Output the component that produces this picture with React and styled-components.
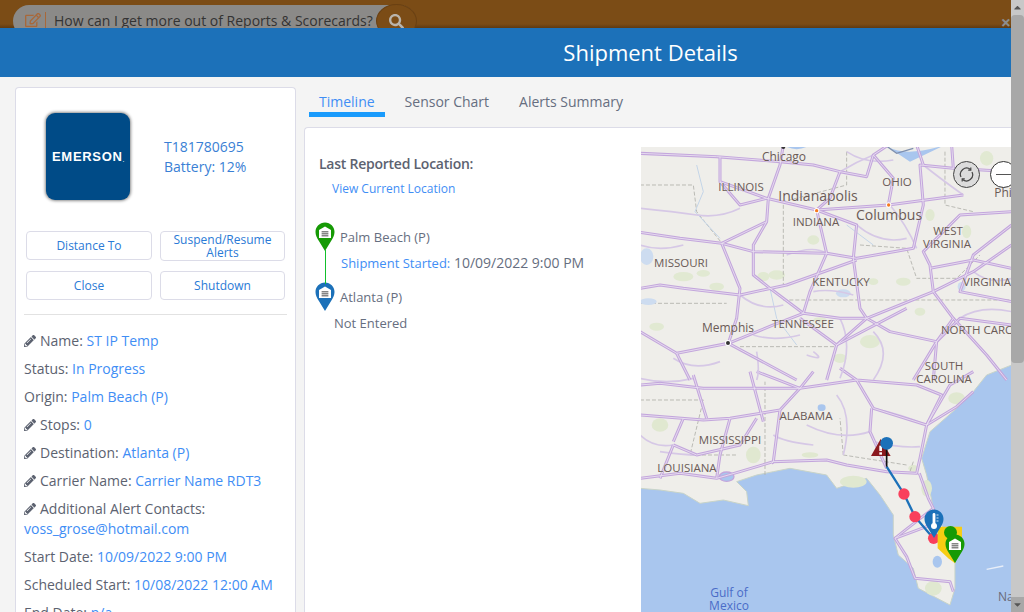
import React from 'react';
import styled, { createGlobalStyle } from 'styled-components';
import { FaPencilAlt, FaSearch, FaRegEdit, FaCaretUp, FaCaretDown } from 'react-icons/fa';

const Global = createGlobalStyle`
  html, body { margin: 0; padding: 0; height: 612px; overflow: hidden; background: #f4f4f4; }
  #root { height: 612px; }
  * { box-sizing: border-box; }
`;

const Page = styled.div`
  display: flex; width: 1024px; height: 612px; overflow: hidden;
  font-family: "Open Sans", "Liberation Sans", sans-serif; font-size: 14px; color: #5c6270;
`;
const Main = styled.div`
  flex: 1; min-width: 0; display: flex; flex-direction: column; height: 612px;
`;
const Scrollbar = styled.div`
  width: 13px; height: 612px; background: #c8c8c8; display: flex; flex-direction: column;
  align-items: stretch; color: #555; font-size: 11px;
`;
const ScrollArrow = styled.div`
  height: 15px; display: flex; align-items: center; justify-content: center; background: ${p => p.$bg};
`;
const ScrollThumb = styled.div`
  height: 348px; background: #a8a8a8; border-radius: 4px;
`;
const ScrollRest = styled.div` flex: 1; `;

const Backdrop = styled.div`
  position: relative; height: 28px; flex: none; overflow: hidden;
  background: linear-gradient(#7b4c16 0, #7b4c16 24px, #5e3a12 28px);
  padding: 5px 0 0 13px; display: flex;
`;
const SearchPill = styled.div`
  position: relative; width: 403px; height: 32px; border-radius: 16px; background: #8b8a88;
  display: flex; align-items: flex-start; padding: 6px 0 0 12px; color: #333; white-space: nowrap;
`;
const EditIcon = styled(FaRegEdit)` color: #a8683a; font-size: 16px; margin-top: 1px; `;
const PillDivider = styled.span` width: 1px; height: 16px; background: #a8683a; margin: 1px 8px 0 4px; `;
const PillText = styled.span` font-size: 14px; line-height: 19px; `;
const PillButton = styled.div`
  position: absolute; right: -1px; top: -1px; width: 41px; height: 34px; border-radius: 50%;
  background: #7b4c16; border: 1px solid #6a4012; display: flex; justify-content: center; padding-top: 9px;
  color: #b9b4ac; font-size: 15px;
`;
const CloseMark = styled.span`
  position: absolute; right: 0; top: 13px; font-size: 18px; line-height: 18px; font-weight: 700; color: #8d8d8d;
`;
const Header = styled.header`
  height: 49px; flex: none; background: #1c71b9; color: #fff; font-size: 22px; line-height: 49px;
  text-align: center; padding-left: 290px;
`;
const Body = styled.div`
  flex: 1; min-height: 0; display: flex; gap: 8px; padding: 10px 0 0 15px; overflow: hidden;
`;
const SideCard = styled.aside`
  width: 281px; flex: none; height: 560px; background: #fff; border: 1px solid #dcdce8; border-bottom: 0;
  border-radius: 4px 4px 0 0; padding: 25px 8px 0; overflow: hidden;
`;
const Identity = styled.div` display: flex; align-items: center; gap: 34px; padding-left: 22px; `;
const Logo = styled.div`
  width: 84px; height: 87px; border-radius: 9px; background: #004b87; color: #fff;
  box-shadow: 0 0 3px 1px rgba(0,0,0,.45); display: flex; align-items: center; justify-content: center;
  font-family: "Liberation Sans", sans-serif; font-weight: 700; font-size: 13px; letter-spacing: .7px;
`;
const LogoDot = styled.span` font-size: 5px; margin-top: 6px; letter-spacing: 0; `;
const IdText = styled.div` color: #3a7fd5; line-height: 20px; `;
const ButtonGrid = styled.div`
  display: grid; grid-template-columns: 126px 125px; column-gap: 8px; row-gap: 10px;
  margin: 31px 0 0 2px;
`;
const ActionButton = styled.button`
  height: ${p => p.$tall ? 30 : 29}px; background: #fff; border: 1px solid #dcdce8; border-radius: 4px;
  font: 12px/13px "Open Sans", sans-serif; color: #2a7ad6; padding: 0 4px; white-space: normal;
`;
const Divider = styled.hr`
  border: 0; border-top: 1px solid #e2e2e2; margin: 14px 0 16px;
`;
const InfoList = styled.div` display: flex; flex-direction: column; gap: 8px; `;
const InfoRow = styled.div` line-height: 20px; color: #5c6270; white-space: nowrap; `;
const Val = styled.span` color: #3f8ef5; `;
const Pencil = styled(FaPencilAlt)` font-size: 12px; margin-right: 4px; vertical-align: -1px; color: #5c6270; `;

const Right = styled.section` flex: 1; min-width: 0; display: flex; flex-direction: column; `;
const Tabs = styled.nav` height: 40px; flex: none; display: flex; gap: 10px; padding-left: 5px; `;
const Tab = styled.div`
  height: 20px; box-sizing: content-box; padding: 5px 10px 0; line-height: 20px;
  color: ${p => p.$active ? '#3f8ef5' : '#666e80'};
  border-bottom: 5px solid ${p => p.$active ? '#1a9bfc' : 'transparent'};
`;
const Panel = styled.div`
  flex: 1; min-height: 0; background: #fff; border: 1px solid #dcdce8; border-width: 1px 0 0 1px;
  border-radius: 4px 0 0 0; display: flex; padding-top: 19px;
`;
const Timeline = styled.div` width: 336px; flex: none; padding: 7px 0 0 14px; `;
const Heading = styled.div` font-weight: 600; line-height: 20px; color: #5c6270; letter-spacing: -0.25px; `;
const ViewLink = styled.div` font-size: 12px; line-height: 16px; color: #3f8ef5; margin: 7px 0 0 13px; `;
const Stops = styled.div` margin-top: 25px; margin-left: -4px; position: relative; `;
const StopRow = styled.div`
  display: flex; align-items: center; gap: 5px; height: 29px; font-size: 13px; color: #666e80;
  margin-top: ${p => p.$mt || 0}px;
`;
const StopSub = styled.div`
  font-size: ${p => p.$big ? 14 : 13}px; line-height: 20px; padding-left: ${p => p.$indent}px;
  margin-top: ${p => p.$mt}px; color: #666e80; white-space: nowrap;
`;
const SubLabel = styled.span` font-size: 13px; color: #3f8ef5; `;
const StopLine = styled.div`
  position: absolute; left: 10px; top: 28px; width: 1px; height: 34px; background: #12c02c;
`;
const PinSvg = styled.svg` width: 20px; height: 29px; flex: none; `;

const MapBox = styled.div`
  position: relative; flex: 1; min-width: 0; height: 465px; overflow: hidden; background: #a9c6ee;
`;
const MapSvg = styled.svg` display: block; width: 370px; height: 465px; `;
const RotateControl = styled.div`
  position: absolute; left: 312px; top: 14px; width: 27px; height: 27px; border-radius: 50%;
  background: #dcdcdc; border: 1px solid #444; display: flex; align-items: center; justify-content: center;
`;
const ZoomControl = styled.div`
  position: absolute; left: 349px; top: 14px; width: 27px; height: 27px; border-radius: 50%;
  background: #fff; border: 1px solid #333; display: flex; align-items: center; justify-content: center;
  &::before { content: ""; width: 15px; height: 1px; background: #555; }
`;

const PIN = "M10 0.5C4.6 0.5 0.5 4.8 0.5 10c0 3.4 1.4 5.6 3.4 9L10 29l6.1-10c2-3.4 3.4-5.6 3.4-9C19.5 4.8 15.4 .5 10 .5z";
const Garage = () => (
  <g>
    <path d="M10 4.5 16 8v8H4V8z" fill="#fff" />
    <rect x="6.6" y="9.2" width="6.8" height="1.2" fill={"#666"} />
    <rect x="6.6" y="11.2" width="6.8" height="1.2" fill={"#666"} />
    <rect x="6.6" y="13.2" width="6.8" height="1.2" fill={"#666"} />
  </g>
);
const Pin = ({ color }) => (
  <PinSvg viewBox="0 0 20 29">
    <path d={PIN} fill={color} />
    <Garage />
  </PinSvg>
);

const ROADS7 = [
  "M0,25 L230,35 L420,50 L520,60 L600,80 L680,95 L700,30 L745,0",
  "M240,35 L240,110 L380,160 L530,195 L745,180 L970,150",
  "M430,0 L420,60 L385,160 L380,230 L245,295 L120,280 L0,262",
  "M245,295 L340,320 L560,325 L650,340 L820,310 L850,180 L840,60 L940,70 L1115,80",
  "M0,430 L60,420 L130,430 L300,450 L440,420 L650,345",
  "M245,295 L300,430 L290,520 L265,595 L110,625 L0,560",
  "M265,595 L400,540 L490,505 L390,430 L340,390 L340,300 L380,230",
  "M530,195 L560,325 L510,440 L490,505 L600,520 L680,520 L780,480 L880,440 L1000,380 L1115,300",
  "M880,440 L870,360 L850,320 L960,210 L1115,200",
  "M530,195 L650,240 L640,340 L660,490 L680,520",
  "M880,440 L940,520 L890,590 L880,705",
  "M680,520 L750,560 L890,590 L960,520 L1115,540",
  "M265,595 L470,705","M590,600 L480,520","M590,600 L680,520 M590,600 L560,705",
  "M590,600 L800,490 M870,370 L1000,345 L1115,370","M745,180 L760,100 L700,30 M600,80 L570,160 L530,195",
  "M110,625 L150,705 M940,520 L1040,630 L1100,705 M890,590 L820,705",
  "M240,110 L300,180 L380,160 M850,60 L830,0 M940,70 L935,0 M1115,240 L1000,330 L960,440 L1115,470",
];
const THIN7 = [
  "M0,190 Q100,200 170,210 T300,190 M600,80 Q650,50 700,30 M440,330 Q520,300 560,325 M0,300 Q60,320 130,300 M300,450 Q360,500 430,480",
  "M750,180 Q800,240 830,310 M650,240 Q720,300 800,280 M340,570 Q400,590 480,570 M520,620 Q560,650 500,630 M600,520 Q640,600 600,700",
  "M100,640 Q160,680 240,650 M350,620 Q360,680 350,705 M700,560 Q760,620 700,705 M960,520 Q1020,480 1115,500 M850,60 Q900,100 970,150",
  "M620,20 Q680,60 760,45 M1000,380 Q1050,420 1115,400 M520,440 Q570,430 640,450",
];
const THIN8 = [
  "M0,10 Q80,30 160,10 M60,230 Q130,240 170,240 M500,150 Q600,200 690,170 M860,150 Q790,120 700,100",
  "M590,60 Q640,120 610,240 M700,200 Q780,220 840,215 M400,180 Q430,200 520,210 M0,180 Q40,220 100,210",
];
const ROADS8 = [
  "M0,120 L190,135 L270,130 L330,120 L420,105 L480,40 L650,15",
  "M0,30 L60,25 L190,40 L350,40 L480,40",
  "M650,15 L700,100 L860,150 L950,95 L1000,50","M650,15 L600,-20 M650,15 L830,30 L905,60 L860,150",
  "M200,130 L160,0 M270,130 L240,240 L230,310 M370,140 L330,-10 M420,105 L400,260 L395,265",
  "M0,310 L120,295 L230,310 L300,290 L400,260 L560,255 L620,270 L740,290 L830,295 L840,250 L860,150",
  "M100,200 L130,130 M100,210 L60,310 M100,210 L170,240 L300,210 L350,130","M695,100 L690,170 L740,280",
  "M838,295 L865,370 L880,400 L790,470 L765,490 L800,545 L825,610 L930,620 L940,650",
  "M880,400 L900,510 M765,490 L900,440",
  "M480,40 L350,-10 M480,40 L520,-10 M860,150 L930,30 L1000,-10",
];
const GREEN = [[790,410,22,12],[520,285,18,14],[130,395,30,14],[410,390,25,14],[230,425,22,12],[540,525,20,8],[690,590,30,20],[50,545,22,12],[700,410,15,10],[370,395,18,14],[190,385,20,10],[870,210,14,18],[980,260,14,20],[1040,40,20,22],[600,640,20,14],[840,500,16,12]];
const GREEN8 = [[640,320,40,18],[880,640,25,22],[860,340,16,25],[950,70,25,18],[60,150,25,20],[340,240,22,25],[510,240,25,8],[820,280,15,10]];
const LABELS = [
  ['Chicago', 784, 161, 12], ['ILLINOIS', 741, 191, 11.5], ['Indianapolis', 818, 201, 14], ['OHIO', 897, 186, 11.5],
  ['INDIANA', 816, 226, 11.5], ['Columbus', 889, 220, 14], ['WEST', 948, 235, 11.5], ['VIRGINIA', 947, 248, 11.5],
  ['MISSOURI', 681, 267, 11.5], ['KENTUCKY', 841, 286, 11.5], ['VIRGINIA', 987, 286, 11.5], ['Memphis', 728, 332, 12],
  ['TENNESSEE', 803, 328, 11.5], ['NORTH CAROLINA', 990, 334, 11.5], ['SOUTH', 944, 370, 11.5], ['CAROLINA', 944, 383, 11.5],
  ['ALABAMA', 806, 420, 11.5], ['MISSISSIPPI', 730, 444, 11.5], ['LOUISIANA', 687, 472, 11.5], ['Phi', 1003, 197, 12],
];
const COAST = "M0,340 L60,345 L130,355 L180,385 L250,375 L325,392 L320,350 L290,320 L350,300 L400,290 L450,280 L560,300 L590,340 L680,310 L720,360 L760,420 L760,480 L775,540 L820,580 L835,640 L930,690 L945,640 L945,560 L920,480 L880,400 L860,300 L845,250 L870,170 L950,100 L1000,50 L1040,0 L1115,-30 L1125,-705 L0,-705 Z";

const Roads = ({ list, thin }) => (
  <>
    {thin.map((d, i) => <path key={'t' + i} d={d} fill="none" stroke="#d6c8e6" strokeWidth="5" />)}
    {list.map((d, i) => <path key={i} d={d} fill="none" stroke="#c3a6dc" strokeWidth="9" strokeLinejoin="round" />)}
    {list.map((d, i) => <path key={'i' + i} d={d} fill="none" stroke="#ece4f2" strokeWidth="2.5" strokeLinejoin="round" />)}
  </>
);

const MapDrawing = () => (
  <MapSvg viewBox="641 147 370 465" fontFamily={'"Open Sans", sans-serif'}>
    <rect x="641" y="147" width="370" height="465" fill="#a9c6ee" />
    <g transform="translate(640 375) scale(.3333)">
      <path d={COAST} fill="#efeeea" stroke="#c9d4c8" strokeWidth="3" />
      {GREEN8.map(([x, y, a, b], i) => <ellipse key={i} cx={x} cy={y} rx={a} ry={b} fill="#e0e8d0" />)}
      <path d="M150,240 H290 M375,300 V20 M610,240 L600,130 M0,75 H190 L150,240 M610,240 L800,270 M820,260 L810,290" fill="none" stroke="#b0b0aa" strokeWidth="2.5" strokeDasharray="12 6" />
      <ellipse cx="892" cy="560" rx="14" ry="18" fill="#a9c6ee" />
      <ellipse cx="545" cy="98" rx="12" ry="10" fill="#a9c6ee" />
      <ellipse cx="260" cy="305" rx="22" ry="14" fill="#a9c6ee" stroke="#c3a6dc" strokeWidth="4" />
      <path d="M1040,583 L1090,573" stroke="#e8eef8" strokeWidth="4" />
      <Roads list={ROADS8} thin={THIN8} />
    </g>
    <g transform="translate(640 145) scale(.3333)">
      {GREEN.map(([x, y, a, b], i) => <ellipse key={i} cx={x} cy={y} rx={a} ry={b} fill="#e1e9d2" />)}
      <path d="M430,0 Q470,25 510,0 Z M735,0 Q790,40 915,0 L810,50 Z" fill="#a9c6ee" />
      <path d="M735,0 L770,25 L820,10" fill="none" stroke="#7e8fae" strokeWidth="4" />
      <path d="M0,120 H160 L170,200 L250,300 M620,20 V120 L430,170 V420 M915,20 V180 L1000,200 M0,475 H260 M430,465 H1115 M300,605 H590 M660,300 L800,310 L830,400 L950,400 L1020,330" fill="none" stroke="#b0b0aa" strokeWidth="2.5" strokeDasharray="12 6" />
      <path d="M170,60 L190,140 L165,200 L240,280 M390,430 L410,520 L470,600 M620,240 L700,300" fill="none" stroke="#c4d5e8" strokeWidth="3" />
      <ellipse cx="20" cy="335" rx="20" ry="25" fill="#cddcf0" /><ellipse cx="610" cy="445" rx="22" ry="12" fill="#cddcf0" /><ellipse cx="965" cy="425" rx="12" ry="14" fill="#cddcf0" /><ellipse cx="25" cy="470" rx="25" ry="10" fill="#cddcf0" />
      <Roads list={ROADS7} thin={THIN7} />
      <circle cx="530" cy="197" r="8" fill="#fff" /><circle cx="530" cy="197" r="5" fill="#f57a20" />
      <circle cx="746" cy="180" r="8" fill="#fff" /><circle cx="746" cy="180" r="5" fill="#f57a20" />
      <circle cx="264" cy="594" r="9" fill="#fff" /><circle cx="264" cy="594" r="6" fill="#333" />
      <circle cx="430" cy="6" r="6" fill="#333" />
    </g>
    {LABELS.map(([t, x, y, s], i) => (
      <text key={i} x={x} y={y} fontSize={s} textAnchor="middle" fill="#6a5a56" stroke="#efeeea" strokeWidth=".5" paintOrder="stroke">{t}</text>
    ))}
    <text x="729" y="597" fontSize="12" textAnchor="middle" fill="#4a6cc8">Gulf of</text>
    <text x="729" y="610" fontSize="12" textAnchor="middle" fill="#4a6cc8">Mexico</text>
    <text x="998" y="601" fontSize="12" fill="#6a6a78">Na</text>
    <g transform="translate(640 375) scale(.3333)">
      <path d="M740,275 L792,357 L825,425 L880,490" fill="none" stroke="#1c71b9" strokeWidth="7" />
      <path d="M722,192 L752,243 H693 Z" fill="#8b1a1f" />
      <rect x="718" y="212" width="8" height="16" fill="#fff" /><rect x="718" y="232" width="8" height="7" fill="#fff" />
      <path d="M740,205 V275" stroke="#111" strokeWidth="5" />
      <circle cx="740" cy="205" r="19" fill="#1c71b9" />
      <circle cx="792" cy="357" r="17" fill="#f9405c" />
      <circle cx="825" cy="425" r="17" fill="#f9405c" />
      <circle cx="881" cy="490" r="17" fill="#f9405c" />
      <path d="M893,455 H966 V515 L945,565 L925,550 L893,520 Z" fill="#f7cd12" />
    </g>
    <g transform="translate(924 509)">
      <path d={PIN} fill="#1c71b9" />
      <rect x="8.6" y="4" width="2.8" height="12" rx="1.4" fill="#fff" />
      <circle cx="10" cy="17" r="3" fill="#fff" />
      <path d="M12.5 6h2M12.5 9h2M12.5 12h2" stroke="#fff" strokeWidth=".8" />
    </g>
    <circle cx="950.5" cy="532.5" r="6.5" fill="#169a05" />
    <g transform="translate(945 534)">
      <path d={PIN} fill="#169a05" />
      <Garage />
    </g>
  </MapSvg>
);

const RotateIcon = () => (
  <svg width="17" height="17" viewBox="0 0 17 17" fill="none" stroke="#444" strokeWidth="1.2">
    <path d="M3 11A6.2 6.2 0 0 1 12.5 3.5" /><path d="M14 6A6.2 6.2 0 0 1 4.5 13.5" />
    <path d="M12.8 1.5v2.6h-2.6M4.2 15.5v-2.6h2.6" />
  </svg>
);

const info = [
  { e: 1, l: 'Name:', v: 'ST IP Temp' }, { l: 'Status:', v: 'In Progress' }, { l: 'Origin:', v: 'Palm Beach (P)' },
  { e: 1, l: 'Stops:', v: '0' }, { e: 1, l: 'Destination:', v: 'Atlanta (P)' }, { e: 1, l: 'Carrier Name:', v: 'Carrier Name RDT3' },
  { e: 1, l: 'Additional Alert Contacts:', v: 'voss_grose@hotmail.com', br: 1 }, { l: 'Start Date:', v: '10/09/2022 9:00 PM' },
  { l: 'Scheduled Start:', v: '10/08/2022 12:00 AM' }, { l: 'End Date:', v: 'n/a' },
];

export default function App() {
  return (
    <Page>
      <Global />
      <Main>
        <Backdrop>
          <SearchPill>
            <EditIcon /><PillDivider />
            <PillText>How can I get more out of Reports &amp; Scorecards?</PillText>
            <PillButton><FaSearch /></PillButton>
          </SearchPill>
          <CloseMark>×</CloseMark>
        </Backdrop>
        <Header>Shipment Details</Header>
        <Body>
          <SideCard>
            <Identity>
              <Logo>EMERSON<LogoDot>.</LogoDot></Logo>
              <IdText>T181780695<br />Battery: 12%</IdText>
            </Identity>
            <ButtonGrid>
              <ActionButton>Distance To</ActionButton>
              <ActionButton $tall>Suspend/Resume Alerts</ActionButton>
              <ActionButton>Close</ActionButton>
              <ActionButton>Shutdown</ActionButton>
            </ButtonGrid>
            <Divider />
            <InfoList>
              {info.map(r => (
                <InfoRow key={r.l}>
                  {r.e ? <Pencil /> : null}{r.l} {r.br ? <br /> : null}<Val>{r.v}</Val>
                </InfoRow>
              ))}
            </InfoList>
          </SideCard>
          <Right>
            <Tabs>
              <Tab $active>Timeline</Tab>
              <Tab>Sensor Chart</Tab>
              <Tab>Alerts Summary</Tab>
            </Tabs>
            <Panel>
              <Timeline>
                <Heading>Last Reported Location:</Heading>
                <ViewLink>View Current Location</ViewLink>
                <Stops>
                  <StopRow><Pin color="#169a05" />Palm Beach (P)</StopRow>
                  <StopSub $big $indent={26} $mt={2}><SubLabel>Shipment Started:</SubLabel> 10/09/2022 9:00 PM</StopSub>
                  <StopLine />
                  <StopRow $mt={9}><Pin color="#1c71b9" />Atlanta (P)</StopRow>
                  <StopSub $indent={19} $mt={2}>Not Entered</StopSub>
                </Stops>
              </Timeline>
              <MapBox>
                <MapDrawing />
                <RotateControl><RotateIcon /></RotateControl>
                <ZoomControl />
              </MapBox>
            </Panel>
          </Right>
        </Body>
      </Main>
      <Scrollbar>
        <ScrollArrow $bg="#c8c8c8"><FaCaretUp /></ScrollArrow>
        <ScrollThumb />
        <ScrollRest />
        <ScrollArrow $bg="#a8a8a8"><FaCaretDown /></ScrollArrow>
      </Scrollbar>
    </Page>
  );
}
